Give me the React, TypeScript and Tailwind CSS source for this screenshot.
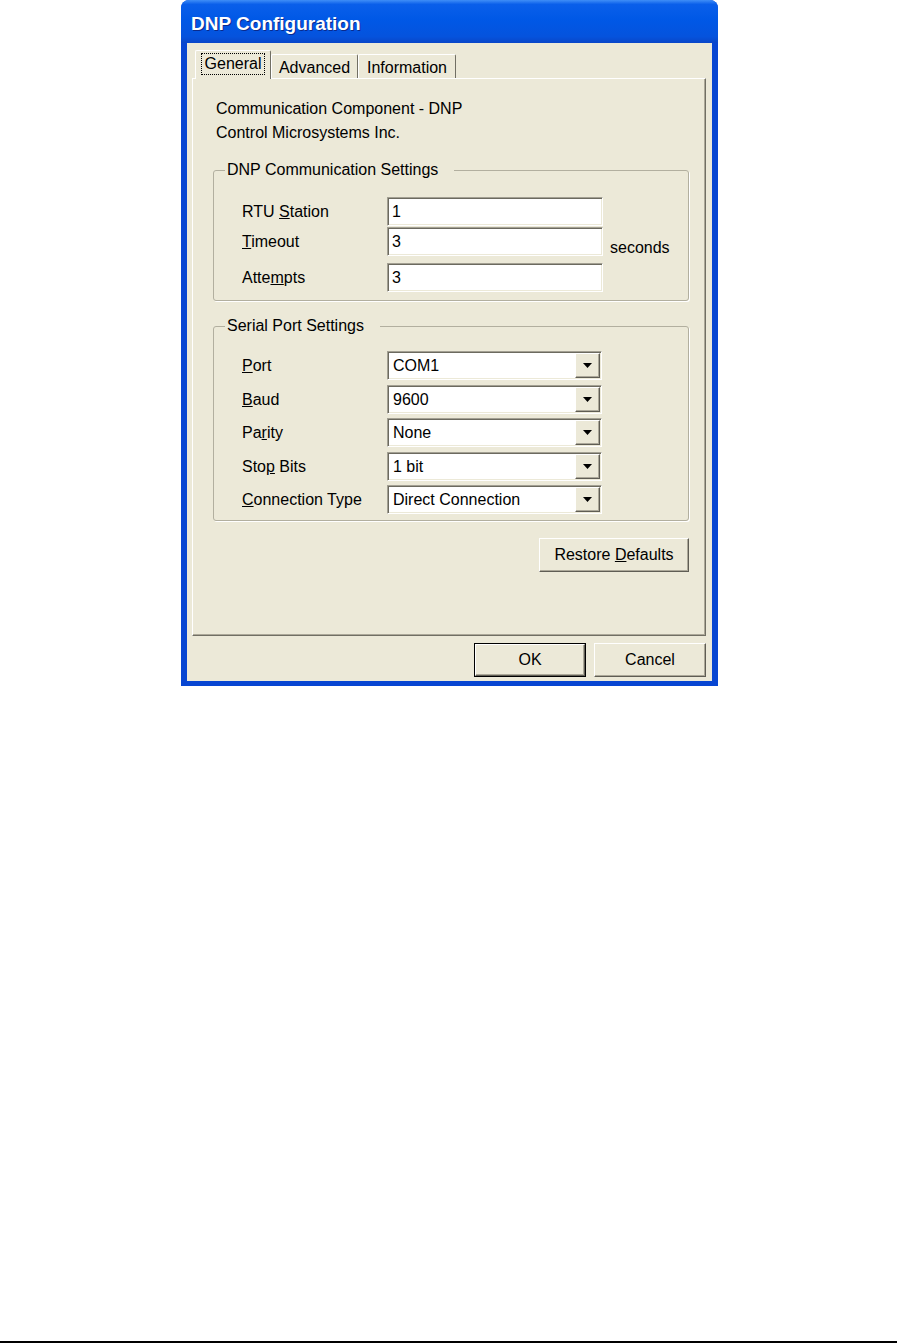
import React from "react";

const sunken =
  "border border-t-[#a3a093] border-l-[#a3a093] border-r-white border-b-white shadow-[inset_1px_1px_0_#6c6a5f,inset_-1px_-1px_0_#ece9d8]";

const raised =
  "border border-t-white border-l-white border-r-[#5f5d54] border-b-[#5f5d54] bg-[#ece9d8] shadow-[inset_-1px_-1px_0_#aca899]";

export default function App() {
  return (
    <div className="flex h-[1343px] w-[897px] flex-col bg-white font-['Liberation_Sans',Arial,sans-serif] text-[16px] text-black">
      <div className="ml-[181px] flex h-[686px] w-[537px] flex-col rounded-t-[8px] bg-[#0846d2]">
        <div className="flex h-[43px] items-center rounded-t-[8px] bg-[linear-gradient(to_bottom,#3f8ef7_0%,#0a5fea_10%,#0058e6_45%,#0553dd_85%,#0a46c8_100%)] pl-[10px] pt-[5px]">
          <span className="text-[19px] font-bold text-white [text-shadow:1px_1px_0_#0a2a8c]">
            DNP Configuration
          </span>
        </div>

        <div className="mx-[6px] mb-[5px] flex flex-1 flex-col bg-[#ece9d8]">
          <div className="flex h-[35px] items-end pl-[8px] pt-[7px]">
            <div className="relative z-10 -mb-[1px] flex h-[29px] w-[76px] items-start justify-center rounded-t-[2px] border-l border-t border-r border-l-white border-t-white border-r-[#716f64] bg-[#ece9d8] pt-[2px]">
              <span className="border border-dotted border-black px-[3px] leading-[20px]">
                General
              </span>
            </div>
            <Tab label="Advanced" width="w-[87px]" />
            <Tab label="Information" width="w-[98px]" />
          </div>

          <div className="ml-[5px] mr-[6px] flex h-[558px] flex-col border border-l-white border-t-white border-r-[#716f64] border-b-[#716f64] pl-[20px] pr-[16px] pt-[18px] shadow-[inset_-1px_-1px_0_#aca899]">
            <div className="pl-[3px] leading-[24px]">
              <p>Communication Component - DNP</p>
              <p>Control Microsystems Inc.</p>
            </div>

            <GroupBox title="DNP Communication Settings" className="mt-[15px]">
              <div className="pb-[8px] pl-[28px] pt-[17px]">
                <div className="flex items-start">
                  <FieldLabel>
                    RTU <u>S</u>tation
                  </FieldLabel>
                  <TextBox value="1" />
                </div>
                <div className="mt-[1px] flex h-[29px] items-start">
                  <FieldLabel>
                    <u>T</u>imeout
                  </FieldLabel>
                  <TextBox value="3" />
                  <span className="ml-[7px] mt-[13px] leading-[16px]">seconds</span>
                </div>
                <div className="mt-[7px] flex items-start">
                  <FieldLabel>
                    Atte<u>m</u>pts
                  </FieldLabel>
                  <TextBox value="3" />
                </div>
              </div>
            </GroupBox>

            <GroupBox title="Serial Port Settings" className="mt-[15px]">
              <div className="pb-[6px] pl-[28px] pt-[15px]">
                <ComboRow value="COM1">
                  <u>P</u>ort
                </ComboRow>
                <ComboRow value="9600" className="mt-[5px]">
                  <u>B</u>aud
                </ComboRow>
                <ComboRow value="None" className="mt-[4px]">
                  Pa<u>r</u>ity
                </ComboRow>
                <ComboRow value="1 bit" className="mt-[5px]">
                  Sto<u>p</u> Bits
                </ComboRow>
                <ComboRow value="Direct Connection" className="mt-[4px]">
                  <u>C</u>onnection Type
                </ComboRow>
              </div>
            </GroupBox>

            <div className="mt-[17px] flex justify-end">
              <button className={`h-[34px] w-[150px] ${raised}`}>
                Restore <u>D</u>efaults
              </button>
            </div>
          </div>

          <div className="mt-[7px] flex justify-end gap-[8px] pr-[6px]">
            <div className="border border-black">
              <button className={`h-[32px] w-[110px] ${raised}`}>OK</button>
            </div>
            <button className={`h-[34px] w-[112px] ${raised}`}>Cancel</button>
          </div>
        </div>
      </div>

      <div className="flex-1" />
      <div className="h-[2px] bg-black" />
    </div>
  );
}

function Tab({ label, width }: { label: string; width: string }) {
  return (
    <div
      className={`flex h-[24px] ${width} items-center justify-center rounded-t-[2px] border-l border-t border-r border-l-white border-t-white border-r-[#716f64] bg-[#ece9d8] pt-[2px] leading-[20px]`}
    >
      {label}
    </div>
  );
}

function GroupBox({
  title,
  className,
  children,
}: {
  title: string;
  className?: string;
  children: React.ReactNode;
}) {
  return (
    <fieldset
      className={`rounded-[3px] border border-[#b2af9f] p-0 shadow-[1px_1px_0_#fff] ${className ?? ""}`}
    >
      <legend className="ml-[11px] bg-[#ece9d8] pl-[2px] pr-[16px] leading-[20px]">
        {title}
      </legend>
      {children}
    </fieldset>
  );
}

function FieldLabel({ children }: { children: React.ReactNode }) {
  return (
    <span className="flex h-[29px] w-[145px] shrink-0 items-center">
      <span>{children}</span>
    </span>
  );
}

function TextBox({ value }: { value: string }) {
  return (
    <div className={`flex h-[29px] w-[216px] items-center bg-white pl-[4px] ${sunken}`}>
      {value}
    </div>
  );
}

function ComboRow({
  value,
  className,
  children,
}: {
  value: string;
  className?: string;
  children: React.ReactNode;
}) {
  return (
    <div className={`flex items-start ${className ?? ""}`}>
      <FieldLabel>{children}</FieldLabel>
      <div className={`flex h-[29px] w-[215px] bg-white p-[1px] ${sunken}`}>
        <span className="flex flex-1 items-center pl-[4px]">{value}</span>
        <span className={`flex w-[25px] items-center justify-center ${raised}`}>
          <svg width="9" height="5" viewBox="0 0 9 5">
            <path d="M0 0h9L4.5 5z" fill="#000" />
          </svg>
        </span>
      </div>
    </div>
  );
}
